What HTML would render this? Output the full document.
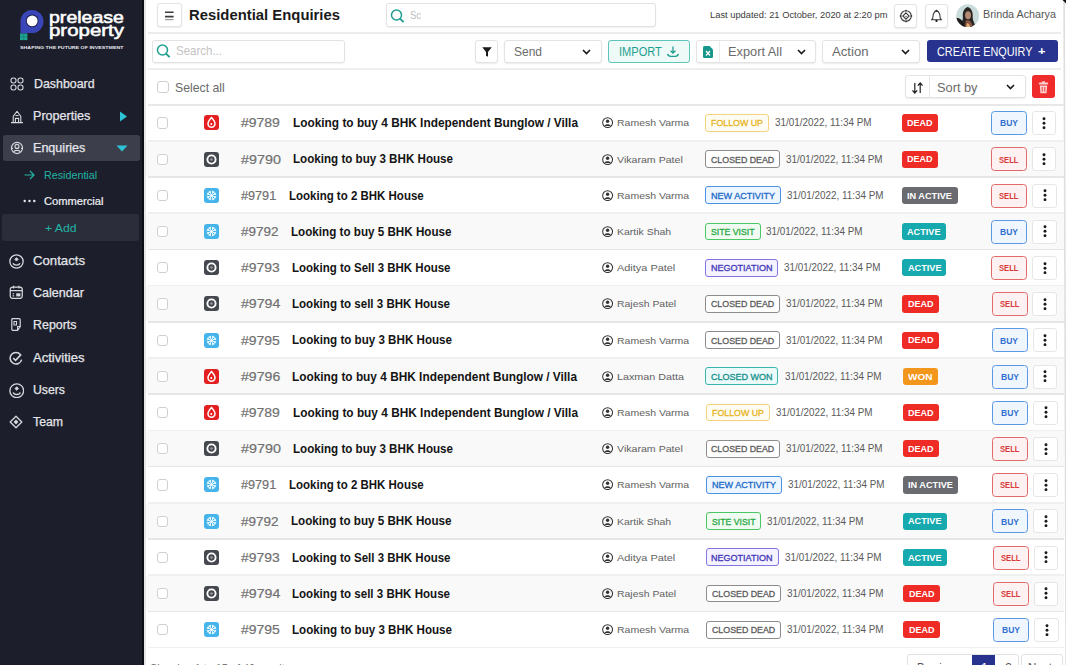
<!DOCTYPE html>
<html><head><meta charset="utf-8"><style>
html,body{margin:0;padding:0;}
body{width:1066px;height:665px;overflow:hidden;position:relative;background:#fff;font-family:'Liberation Sans',sans-serif;}
div{box-sizing:border-box;}
</style></head><body>
<div style="position:absolute;left:0px;top:0px;width:141.5px;height:665px;background:#1c1f2b"></div>
<div style="position:absolute;left:141.5px;top:0px;width:2.5px;height:665px;background:#0c0e15"></div>
<div style="position:absolute;left:144px;top:0px;width:1.5px;height:665px;background:#e6e6e9"></div>
<svg style="position:absolute;left:1058px;top:0" width="8" height="665"><path d="M5.3 0 L6.9 0 L8.9 665 L7.3 665 Z" fill="#dedede"/></svg>
<svg style="position:absolute;left:1062px;top:0" width="4" height="4"><path d="M0.5 0 H4 V3.5 Z" fill="#111"/></svg>
<svg style="position:absolute;left:18px;top:8px" width="30" height="34" viewBox="0 0 30 34">
<path d="M2.5 13.5 A11.5 11.5 0 1 1 14 25 L9 25 L9 25.5 L2.5 25.5 Z" fill="#3a45b8"/>
<circle cx="14.2" cy="12.9" r="6.4" fill="#1d2150"/>
<circle cx="14.2" cy="12.9" r="5.4" fill="#fff"/>
<rect x="2" y="25.6" width="7.4" height="6.5" fill="#1fa391"/>
<path d="M5.7 25.6 V32.1 M2 28.85 H9.4" stroke="#157a6d" stroke-width="0.6"/>
</svg>
<div id="t0" style="position:absolute;left:48.6px;top:6.90px;height:20.62px;line-height:20.62px;font-size:16.5px;font-weight:normal;color:#ffffff;white-space:nowrap;transform:scaleX(1.1849);transform-origin:0 50%;-webkit-text-stroke:0.55px #fff;">prelease</div>
<div id="t1" style="position:absolute;left:48.6px;top:20.31px;height:20.62px;line-height:20.62px;font-size:16.5px;font-weight:normal;color:#ffffff;white-space:nowrap;transform:scaleX(1.2390);transform-origin:0 50%;-webkit-text-stroke:0.55px #fff;">property</div>
<div id="t2" style="position:absolute;left:19.7px;top:45.31px;height:5.25px;line-height:5.25px;font-size:4.2px;font-weight:bold;color:#e8e8ee;white-space:nowrap;transform:scaleX(1.2636);transform-origin:0 50%;">SHAPING THE FUTURE OF INVESTMENT</div>
<svg style="position:absolute;left:9.8px;top:77.2px" width="14" height="14" viewBox="0 0 14 14" fill="none" stroke="#d7d8de" stroke-width="1.1"><rect x="1" y="1" width="5" height="5" rx="2.2"/><rect x="8" y="1" width="5" height="5" rx="2.2"/><rect x="1" y="8" width="5" height="5" rx="2.2"/><rect x="8" y="8" width="5" height="5" rx="2.2"/></svg>
<div id="t3" style="position:absolute;left:33.6px;top:76.82px;height:15.12px;line-height:15.12px;font-size:12.1px;font-weight:normal;color:#e4e5ea;white-space:nowrap;transform:scaleX(1.0241);transform-origin:0 50%;-webkit-text-stroke:0.25px #e4e5ea;">Dashboard</div>
<svg style="position:absolute;left:9.8px;top:109.5px" width="14" height="14" viewBox="0 0 14 14" fill="none" stroke="#d7d8de" stroke-width="1.1"><path d="M7 1.2 L3.2 6.5 L3.2 12.5 M7 1.2 L10.8 6.5 L10.8 12.5 M1 12.6 H13 M5.4 12.5 V8.4 H8.6 V12.5 M5.5 5.5 H8.5"/></svg>
<div id="t4" style="position:absolute;left:33.3px;top:109.01px;height:15.12px;line-height:15.12px;font-size:12.1px;font-weight:normal;color:#e4e5ea;white-space:nowrap;transform:scaleX(1.0413);transform-origin:0 50%;-webkit-text-stroke:0.25px #e4e5ea;">Properties</div>
<svg style="position:absolute;left:118.5px;top:110.5px" width="9" height="11" viewBox="0 0 9 11"><path d="M1 0.5 L8 5.5 L1 10.5 Z" fill="#2cc3d6"/></svg>
<div style="position:absolute;left:2.5px;top:135.2px;width:137px;height:25.6px;background:#3c3f4b;border-radius:3px"></div>
<svg style="position:absolute;left:9.8px;top:141.3px" width="14" height="14" viewBox="0 0 14 14" fill="none" stroke="#d7d8de" stroke-width="1.1"><circle cx="7" cy="7" r="5.6"/><circle cx="7" cy="5.4" r="2"/><path d="M3.6 11 C4.2 8.8 9.8 8.8 10.4 11"/><path d="M1.6 7.4 H3 M11 7.4 H12.4"/></svg>
<div id="t5" style="position:absolute;left:33.0px;top:141.20px;height:15.12px;line-height:15.12px;font-size:12.1px;font-weight:normal;color:#e4e5ea;white-space:nowrap;transform:scaleX(1.0392);transform-origin:0 50%;-webkit-text-stroke:0.25px #e4e5ea;">Enquiries</div>
<svg style="position:absolute;left:116px;top:145px" width="12" height="7" viewBox="0 0 12 7"><path d="M0.5 0.5 L11.5 0.5 L6 6.5 Z" fill="#2cc3d6"/></svg>
<svg style="position:absolute;left:24px;top:170px" width="11" height="10" viewBox="0 0 11 10" fill="none" stroke="#22b3a4" stroke-width="1.2"><path d="M0.5 5 H10 M6 1 L10 5 L6 9"/></svg>
<div id="t6" style="position:absolute;left:44.2px;top:168.71px;height:13.75px;line-height:13.75px;font-size:11px;font-weight:normal;color:#22b3a4;white-space:nowrap;transform:scaleX(0.9757);transform-origin:0 50%;">Residential</div>
<svg style="position:absolute;left:22.5px;top:199px" width="13" height="4" viewBox="0 0 13 4" fill="#e8e8ee"><circle cx="1.7" cy="2" r="1.2"/><circle cx="6.5" cy="2" r="1.2"/><circle cx="11.3" cy="2" r="1.2"/></svg>
<div id="t7" style="position:absolute;left:44.0px;top:194.50px;height:13.12px;line-height:13.12px;font-size:10.5px;font-weight:normal;color:#f0f0f4;white-space:nowrap;transform:scaleX(1.0622);transform-origin:0 50%;-webkit-text-stroke:0.2px #f0f0f4;">Commercial</div>
<div style="position:absolute;left:2.2px;top:214px;width:137.2px;height:26.5px;background:#2b2e3a;border-radius:3px"></div>
<div id="t8" style="position:absolute;left:45.0px;top:221.81px;height:13.75px;line-height:13.75px;font-size:11px;font-weight:normal;color:#22b3a4;white-space:nowrap;transform:scaleX(1.1071);transform-origin:0 50%;">+ Add</div>
<svg style="position:absolute;left:9.3px;top:253.6px" width="15" height="15" viewBox="0 0 14 14" fill="none" stroke="#d7d8de" stroke-width="1.1"><circle cx="7" cy="7" r="6.2" stroke-width="1.2"/><path d="M7 3.4 L8.6 5 L7 6.6 L5.4 5 Z" fill="#d7d8de" stroke-width="0.8"/><path d="M3.8 8.6 C4.6 11 9.4 11 10.2 8.6" stroke-width="1.3"/></svg>
<div id="t9" style="position:absolute;left:32.5px;top:254.01px;height:15.12px;line-height:15.12px;font-size:12.1px;font-weight:normal;color:#e4e5ea;white-space:nowrap;transform:scaleX(1.0894);transform-origin:0 50%;-webkit-text-stroke:0.25px #e4e5ea;">Contacts</div>
<svg style="position:absolute;left:9.2px;top:284.8px" width="14.5" height="14.5" viewBox="0 0 14 14" fill="none" stroke="#d7d8de" stroke-width="1.1"><rect x="1.2" y="2" width="11.6" height="11" rx="2.4" stroke-width="1.2"/><path d="M4.4 0.8 V3.4 M9.6 0.8 V3.4 M1.2 5.4 H12.8"/><rect x="7" y="8" width="4" height="3" fill="#d7d8de" stroke="none"/><path d="M3.5 8.5 H5 M3.5 10.5 H5"/></svg>
<div id="t10" style="position:absolute;left:32.5px;top:286.20px;height:15.12px;line-height:15.12px;font-size:12.1px;font-weight:normal;color:#e4e5ea;white-space:nowrap;transform:scaleX(1.0392);transform-origin:0 50%;-webkit-text-stroke:0.25px #e4e5ea;">Calendar</div>
<svg style="position:absolute;left:9.4px;top:317px" width="14" height="15" viewBox="0 0 14 14" fill="none" stroke="#d7d8de" stroke-width="1.1"><path d="M2.8 1.2 H10.2 Q11.2 1.2 11.2 2.2 V9 L8.6 12.8 H3.8 Q2.8 12.8 2.8 11.8 V2.2 Q2.8 1.2 3.8 1.2 Z" stroke-width="1.2"/><path d="M5 4 H7.5 V7.5 H5 Z M11.2 9 H8.6 V12.8" stroke-width="1.1"/></svg>
<div id="t11" style="position:absolute;left:32.5px;top:318.41px;height:15.12px;line-height:15.12px;font-size:12.1px;font-weight:normal;color:#e4e5ea;white-space:nowrap;transform:scaleX(1.0269);transform-origin:0 50%;-webkit-text-stroke:0.25px #e4e5ea;">Reports</div>
<svg style="position:absolute;left:9.2px;top:350.6px" width="14" height="14" viewBox="0 0 14 14" fill="none" stroke="#d7d8de" stroke-width="1.1"><path d="M11.5 3.6 A5.8 5.8 0 1 0 12.6 8.6" stroke-width="1.5"/><path d="M4.2 7.2 L6.6 9.4 L12.2 3.4" stroke-width="1.6"/></svg>
<div id="t12" style="position:absolute;left:32.5px;top:350.61px;height:15.12px;line-height:15.12px;font-size:12.1px;font-weight:normal;color:#e4e5ea;white-space:nowrap;transform:scaleX(1.0792);transform-origin:0 50%;-webkit-text-stroke:0.25px #e4e5ea;">Activities</div>
<svg style="position:absolute;left:8.8px;top:382.6px" width="15.5" height="15.5" viewBox="0 0 14 14" fill="none" stroke="#d7d8de" stroke-width="1.1"><circle cx="7" cy="7" r="6.2" stroke-width="1.2"/><path d="M7 3.4 L8.6 5 L7 6.6 L5.4 5 Z" fill="#d7d8de" stroke-width="0.8"/><path d="M3.8 8.6 C4.6 11 9.4 11 10.2 8.6" stroke-width="1.3"/></svg>
<div id="t13" style="position:absolute;left:32.5px;top:383.01px;height:15.12px;line-height:15.12px;font-size:12.1px;font-weight:normal;color:#e4e5ea;white-space:nowrap;transform:scaleX(1.0129);transform-origin:0 50%;-webkit-text-stroke:0.25px #e4e5ea;">Users</div>
<svg style="position:absolute;left:8.6px;top:414.8px" width="14" height="14" viewBox="0 0 14 14" fill="none" stroke="#d7d8de" stroke-width="1.1"><path d="M7 1.2 L12.8 7 L7 12.8 L1.2 7 Z" stroke-width="1.3" stroke-linejoin="round"/><path d="M7 4.6 L9.4 7 L7 9.4 L4.6 7 Z" fill="#d7d8de" stroke="none"/></svg>
<div id="t14" style="position:absolute;left:32.5px;top:415.01px;height:15.12px;line-height:15.12px;font-size:12.1px;font-weight:normal;color:#e4e5ea;white-space:nowrap;transform:scaleX(1.0143);transform-origin:0 50%;-webkit-text-stroke:0.25px #e4e5ea;">Team</div>
<div style="position:absolute;left:157px;top:3px;width:24.5px;height:23.5px;background:#fff;border:1px solid #e3e3e3;border-radius:3px;box-shadow:0 1px 1.5px rgba(0,0,0,0.08)"></div>
<svg style="position:absolute;left:165.3px;top:11px" width="9" height="10" viewBox="0 0 9 10" stroke-width="1.6"><path d="M0 1.3 H8.6 M0 5.6 H8.6" stroke="#3c3c3c"/><path d="M0 8.6 H8.6" stroke="#9a9a9a" stroke-width="1.2"/></svg>
<div id="t15" style="position:absolute;left:188.6px;top:5.41px;height:19.0px;line-height:19.0px;font-size:15.2px;font-weight:bold;color:#1a1a1a;white-space:nowrap;transform:scaleX(0.9776);transform-origin:0 50%;">Residential Enquiries</div>
<div style="position:absolute;left:385.6px;top:3.4px;width:270px;height:23.2px;background:#fff;border:1px solid #e2e2e2;border-radius:3px;box-shadow:0 1px 1.5px rgba(0,0,0,0.06)"></div>
<svg style="position:absolute;left:389.5px;top:8.5px" width="15" height="15" viewBox="0 0 15 15" fill="none" stroke="#1f9e90" stroke-width="1.5"><circle cx="6.5" cy="6" r="5"/><path d="M10 9.6 L13.6 13.2" stroke-width="1.9"/></svg>
<div id="t16" style="position:absolute;left:410.4px;top:7.90px;height:14.38px;line-height:14.38px;font-size:11.5px;font-weight:normal;color:#bdbdbd;white-space:nowrap;transform:scaleX(0.8196);transform-origin:0 50%;">Sc</div>
<div id="t17" style="position:absolute;left:709.6px;top:10.10px;height:10.62px;line-height:10.62px;font-size:8.5px;font-weight:normal;color:#3c3c3c;white-space:nowrap;transform:scaleX(1.0982);transform-origin:0 50%;">Last updated: 21 October, 2020 at 2:20 pm</div>
<div style="position:absolute;left:893.9px;top:3.5px;width:23px;height:24px;background:#fff;border:1px solid #e3e3e3;border-radius:3px;box-shadow:0 1px 1.5px rgba(0,0,0,0.08)"></div>
<svg style="position:absolute;left:898.5px;top:8.5px" width="14" height="14" viewBox="0 0 14 14" fill="none" stroke="#3a3a3a" stroke-width="1.1"><circle cx="7" cy="7" r="5.3"/><path d="M7 3.9 L10.1 7 L7 10.1 L3.9 7 Z"/><g fill="#3a3a3a" stroke="none"><circle cx="7" cy="1.6" r="0.9"/><circle cx="7" cy="12.4" r="0.9"/><circle cx="1.6" cy="7" r="0.9"/><circle cx="12.4" cy="7" r="0.9"/><circle cx="7" cy="7.4" r="0.7"/></g></svg>
<div style="position:absolute;left:924.6px;top:3.5px;width:23.6px;height:24px;background:#fff;border:1px solid #e3e3e3;border-radius:3px;box-shadow:0 1px 1.5px rgba(0,0,0,0.08)"></div>
<svg style="position:absolute;left:930px;top:8.5px" width="13" height="14" viewBox="0 0 13 14" fill="none" stroke="#3a3a3a" stroke-width="1.1"><path d="M6.5 1.2 C4 2.8 3 5 3 7.5 C3 9 2.6 10 1.6 10.8 H11.4 C10.4 10 10 9 10 7.5 C10 5 9 2.8 6.5 1.2 Z" stroke-linejoin="round"/><circle cx="6.5" cy="11.9" r="1.1" fill="#1a1a1a" stroke="none"/></svg>
<svg style="position:absolute;left:956.2px;top:3.6px" width="23.5" height="23.5" viewBox="0 0 24 24">
<defs><clipPath id="av"><circle cx="12" cy="12" r="11.7"/></clipPath></defs>
<g clip-path="url(#av)">
<rect width="24" height="24" fill="#c9dbdb"/>
<path d="M12 3 C8 4 6.5 9 7 13 C7.5 17 5 20 3 24 H21 C19 20 17 17 17 13 C17.5 9 16 4 12 3 Z" fill="#2a2522"/>
<ellipse cx="12.3" cy="11.5" rx="3" ry="4" fill="#b48a73"/>
<path d="M0 14 C4 14 8 17 9 24 H0 Z" fill="#1d1b1c"/>
<path d="M10 17 C13 16 16 17 17 24 H9 Z" fill="#8c5546"/>
<path d="M11 20 C12 19 14 20 14.5 24 H10.5 Z" fill="#d9b27a"/>
</g></svg>
<div id="t18" style="position:absolute;left:982.6px;top:9.00px;height:12.5px;line-height:12.5px;font-size:10px;font-weight:normal;color:#555;white-space:nowrap;transform:scaleX(1.0762);transform-origin:0 50%;">Brinda Acharya</div>
<div style="position:absolute;left:148px;top:31.8px;width:913px;height:1.8px;background:#ececed"></div>
<div style="position:absolute;left:151.5px;top:39.5px;width:193px;height:23.5px;background:#fff;border:1px solid #e2e2e2;border-radius:3px;box-shadow:0 1px 1.5px rgba(0,0,0,0.06)"></div>
<svg style="position:absolute;left:155.5px;top:44px" width="15" height="15" viewBox="0 0 15 15" fill="none" stroke="#1f9e90" stroke-width="1.5"><circle cx="6.5" cy="6" r="5"/><path d="M10 9.6 L13.6 13.2" stroke-width="1.9"/></svg>
<div id="t19" style="position:absolute;left:175.6px;top:44.31px;height:15.5px;line-height:15.5px;font-size:12.4px;font-weight:normal;color:#c4c4c4;white-space:nowrap;transform:scaleX(0.9275);transform-origin:0 50%;">Search...</div>
<div style="position:absolute;left:475.2px;top:39.7px;width:22.5px;height:23px;background:#fff;border:1px solid #e3e3e3;border-radius:3px;box-shadow:0 1px 1.5px rgba(0,0,0,0.08)"></div>
<svg style="position:absolute;left:481.5px;top:46.5px" width="10" height="10" viewBox="0 0 10 10" fill="#1a1a1a"><path d="M0.3 0.3 H9.7 L6 5 V9.7 L4 8.7 V5 Z"/></svg>
<div style="position:absolute;left:504px;top:39.7px;width:97.6px;height:23px;background:#fff;border:1px solid #e3e3e3;border-radius:3px;box-shadow:0 1px 1.5px rgba(0,0,0,0.08)"></div>
<div id="t20" style="position:absolute;left:513.6px;top:44.50px;height:15.0px;line-height:15.0px;font-size:12px;font-weight:normal;color:#6b6b6b;white-space:nowrap;transform:scaleX(0.9989);transform-origin:0 50%;">Send</div>
<svg style="position:absolute;left:582.3px;top:48.5px" width="9" height="6" viewBox="0 0 9 6" fill="none" stroke="#1a1a1a" stroke-width="1.6"><path d="M1 1 L4.5 4.6 L8 1"/></svg>
<div style="position:absolute;left:608px;top:39.7px;width:81.6px;height:23px;background:#eefaf8;border:1.3px solid #5cc4b8;border-radius:3px"></div>
<div id="t21" style="position:absolute;left:618.6px;top:44.50px;height:15.0px;line-height:15.0px;font-size:12px;font-weight:normal;color:#1f9e90;white-space:nowrap;transform:scaleX(0.9214);transform-origin:0 50%;">IMPORT</div>
<svg style="position:absolute;left:666px;top:44.5px" width="14" height="13" viewBox="0 0 14 13" fill="none" stroke="#1f9e90" stroke-width="1.2"><path d="M7 1.5 V8.2 M4.6 5.8 L7 8.2 L9.4 5.8" stroke-width="1.3"/><path d="M1.6 9 Q2.2 11.3 4.5 11.3 H9.5 Q11.8 11.3 12.4 9" stroke-width="1.3"/></svg>
<div style="position:absolute;left:695.6px;top:39.7px;width:120.6px;height:23px;background:#fff;border:1px solid #e3e3e3;border-radius:3px;box-shadow:0 1px 1.5px rgba(0,0,0,0.08)"></div>
<div style="position:absolute;left:719.1px;top:40.5px;width:1px;height:21.5px;background:#ececec"></div>
<svg style="position:absolute;left:702.5px;top:45.8px" width="10" height="12" viewBox="0 0 10 12"><path d="M0 1.5 Q0 0 1.5 0 H6.5 L10 3.5 V10.5 Q10 12 8.5 12 H1.5 Q0 12 0 10.5 Z" fill="#17978b"/><path d="M3 5 L7 9.5 M7 5 L3 9.5" stroke="#fff" stroke-width="1.3"/></svg>
<div id="t22" style="position:absolute;left:728.2px;top:44.50px;height:15.0px;line-height:15.0px;font-size:12px;font-weight:normal;color:#6b6b6b;white-space:nowrap;transform:scaleX(1.0650);transform-origin:0 50%;">Export All</div>
<svg style="position:absolute;left:796.6px;top:48.5px" width="9" height="6" viewBox="0 0 9 6" fill="none" stroke="#1a1a1a" stroke-width="1.6"><path d="M1 1 L4.5 4.6 L8 1"/></svg>
<div style="position:absolute;left:822px;top:39.7px;width:97.8px;height:23px;background:#fff;border:1px solid #e3e3e3;border-radius:3px;box-shadow:0 1px 1.5px rgba(0,0,0,0.08)"></div>
<div id="t23" style="position:absolute;left:832.2px;top:44.50px;height:15.0px;line-height:15.0px;font-size:12px;font-weight:normal;color:#6b6b6b;white-space:nowrap;transform:scaleX(1.0971);transform-origin:0 50%;">Action</div>
<svg style="position:absolute;left:900.8px;top:48.5px" width="9" height="6" viewBox="0 0 9 6" fill="none" stroke="#1a1a1a" stroke-width="1.6"><path d="M1 1 L4.5 4.6 L8 1"/></svg>
<div style="position:absolute;left:926.8px;top:39.8px;width:131.6px;height:22.6px;background:#27338f;border-radius:3px"></div>
<div id="t24" style="position:absolute;left:937.2px;top:44.51px;height:15.5px;line-height:15.5px;font-size:12.4px;font-weight:normal;color:#ffffff;white-space:nowrap;transform:scaleX(0.8760);transform-origin:0 50%;">CREATE ENQUIRY</div>
<div id="t25" style="position:absolute;left:1037.8px;top:45.00px;height:13.75px;line-height:13.75px;font-size:11px;font-weight:bold;color:#ffffff;white-space:nowrap;transform:scaleX(1.1650);transform-origin:0 50%;">+</div>
<div style="position:absolute;left:148px;top:68px;width:913px;height:1.6px;background:#eeeeef"></div>
<div style="position:absolute;left:157px;top:81px;width:12.3px;height:12.3px;background:#fff;border:1.2px solid #cfcfcf;border-radius:3px"></div>
<div id="t26" style="position:absolute;left:174.8px;top:79.61px;height:16.0px;line-height:16.0px;font-size:12.8px;font-weight:normal;color:#6a6a6a;white-space:nowrap;transform:scaleX(0.9588);transform-origin:0 50%;">Select all</div>
<div style="position:absolute;left:905.3px;top:75.4px;width:120.4px;height:23px;background:#fff;border:1px solid #e3e3e3;border-radius:3px;box-shadow:0 1px 1.5px rgba(0,0,0,0.08)"></div>
<div style="position:absolute;left:928.5px;top:76.2px;width:1px;height:21.5px;background:#e6e6e6"></div>
<svg style="position:absolute;left:910.5px;top:81.5px" width="13" height="12" viewBox="0 0 13 12" fill="none" stroke="#222" stroke-width="1.2"><path d="M3.8 1 V11 M1.4 8.4 L3.8 11 L6.2 8.4 M9.2 11 V1 M6.8 3.6 L9.2 1 L11.6 3.6"/></svg>
<div id="t27" style="position:absolute;left:937.4px;top:80.50px;height:15.0px;line-height:15.0px;font-size:12px;font-weight:normal;color:#6b6b6b;white-space:nowrap;transform:scaleX(1.0654);transform-origin:0 50%;">Sort by</div>
<svg style="position:absolute;left:1005.9px;top:84.3px" width="9" height="6" viewBox="0 0 9 6" fill="none" stroke="#1a1a1a" stroke-width="1.6"><path d="M1 1 L4.5 4.6 L8 1"/></svg>
<div style="position:absolute;left:1031.8px;top:75.4px;width:23.6px;height:23px;background:#ef2b2b;border-radius:3px"></div>
<svg style="position:absolute;left:1038px;top:80.5px" width="11" height="13" viewBox="0 0 11 13"><rect x="0.8" y="1.6" width="9.4" height="2" rx="0.8" fill="#fbd0d0"/><rect x="3.8" y="0.3" width="3.4" height="1.6" rx="0.6" fill="#fbd0d0"/><path d="M1.8 4.4 H9.2 L8.6 12.2 H2.4 Z" fill="#fbd0d0"/><path d="M4.2 6 V10.6 M6.8 6 V10.6" stroke="#ef2b2b" stroke-width="0.9"/></svg>
<div style="position:absolute;left:148px;top:104.2px;width:915.5px;height:1.5px;background:#e8e8e9"></div>
<div style="position:absolute;left:148px;top:140.0px;width:915.5px;height:1.6px;background:#f0f0f1"></div>
<div style="position:absolute;left:156.7px;top:117.30000000000001px;width:11.3px;height:11.3px;background:#fff;border:1.2px solid #d0d0d0;border-radius:3px"></div>
<svg style="position:absolute;left:203.6px;top:115.40px" width="15" height="15" viewBox="0 0 15 15"><rect width="15" height="15" rx="3" fill="#e41f1f"/><path d="M7.5 2.6 C9.6 4.9 11 6.7 11 8.7 A3.5 3.5 0 0 1 4 8.7 C4 6.7 5.4 4.9 7.5 2.6 Z" fill="none" stroke="#fff" stroke-width="1.5"/><circle cx="7.3" cy="8.9" r="1" fill="#fff"/></svg>
<div id="t28" style="position:absolute;left:240.6px;top:115.41px;height:16.5px;line-height:16.5px;font-size:13.2px;font-weight:normal;color:#707070;white-space:nowrap;transform:scaleX(1.0608);transform-origin:0 50%;-webkit-text-stroke:0.2px #707070;">#9789</div>
<div id="t29" style="position:absolute;left:292.5px;top:116.11px;height:15.38px;line-height:15.38px;font-size:12.3px;font-weight:bold;color:#141414;white-space:nowrap;transform:scaleX(0.9642);transform-origin:0 50%;">Looking to buy 4 BHK Independent Bunglow / Villa</div>
<svg style="position:absolute;left:602.2px;top:117.30px" width="11.2" height="11.2" viewBox="0 0 12 12"><circle cx="6" cy="6" r="5.3" fill="none" stroke="#333" stroke-width="1.1"/><circle cx="6" cy="4.6" r="1.8" fill="#333"/><path d="M2.6 9.6 C3.4 7.3 8.6 7.3 9.4 9.6 Z" fill="#333"/></svg>
<div id="t30" style="position:absolute;left:616.8px;top:117.40px;height:12.25px;line-height:12.25px;font-size:9.8px;font-weight:normal;color:#626262;white-space:nowrap;transform:scaleX(1.0721);transform-origin:0 50%;">Ramesh Varma</div>
<div style="position:absolute;left:705.2px;top:114.0px;width:64.3px;height:17.8px;background:#fffdf3;border:1.3px solid #f3d37c;border-radius:3px"></div>
<div id="t31" style="position:absolute;left:711.35px;top:118.30px;height:11.0px;line-height:11.0px;font-size:8.8px;font-weight:normal;color:#e6b41e;white-space:nowrap;transform:scaleX(1.0036);transform-origin:0 50%;-webkit-text-stroke:0.3px #e6b41e;">FOLLOW UP</div>
<div id="t32" style="position:absolute;left:775.3px;top:117.40px;height:12.5px;line-height:12.5px;font-size:10px;font-weight:normal;color:#5a5a5a;white-space:nowrap;transform:scaleX(0.9880);transform-origin:0 50%;">31/01/2022, 11:34 PM</div>
<div style="position:absolute;left:901.7px;top:114.4px;width:36.4px;height:17.2px;background:#ee2b25;border-radius:3px"></div>
<div id="t33" style="position:absolute;left:907.1500000000001px;top:118.21px;height:11.62px;line-height:11.62px;font-size:9.3px;font-weight:bold;color:#ffffff;white-space:nowrap;transform:scaleX(0.9680);transform-origin:0 50%;">DEAD</div>
<div style="position:absolute;left:990.8px;top:111.10000000000001px;width:36px;height:24.2px;background:#eff6fe;border:1.3px solid #5a98e4;border-radius:3.5px"></div>
<div id="t34" style="position:absolute;left:999.5px;top:118.30px;height:11.62px;line-height:11.62px;font-size:9.3px;font-weight:bold;color:#2f6fd0;white-space:nowrap;transform:scaleX(0.9165);transform-origin:0 50%;">BUY</div>
<div style="position:absolute;left:1031.6px;top:111.10000000000001px;width:24.6px;height:24.2px;background:#fff;border:1px solid #e6e6e6;border-radius:3px"></div>
<svg style="position:absolute;left:1042.20px;top:116.70px" width="4" height="12.4" viewBox="0 0 4 12.4" fill="#1a1a1a"><circle cx="2" cy="1.7" r="1.45"/><circle cx="2" cy="6.2" r="1.45"/><circle cx="2" cy="10.7" r="1.45"/></svg>
<div style="position:absolute;left:145.5px;top:141.6px;width:918px;height:34.6px;background:#f9f9f9"></div>
<div style="position:absolute;left:148px;top:176.2px;width:915.5px;height:1.6px;background:#e6e6e7"></div>
<div style="position:absolute;left:156.7px;top:153.50000000000003px;width:11.3px;height:11.3px;background:#fff;border:1.2px solid #d0d0d0;border-radius:3px"></div>
<svg style="position:absolute;left:203.6px;top:151.60px" width="15" height="15" viewBox="0 0 15 15"><rect width="15" height="15" rx="3" fill="#45484f"/><circle cx="7.5" cy="7.5" r="4.1" fill="none" stroke="#fff" stroke-width="1.9"/><circle cx="7.5" cy="7.5" r="1.2" fill="#9a9ca0"/></svg>
<div id="t35" style="position:absolute;left:240.6px;top:151.60px;height:16.5px;line-height:16.5px;font-size:13.2px;font-weight:normal;color:#707070;white-space:nowrap;transform:scaleX(1.0880);transform-origin:0 50%;-webkit-text-stroke:0.2px #707070;">#9790</div>
<div id="t36" style="position:absolute;left:293.1px;top:152.30px;height:15.38px;line-height:15.38px;font-size:12.3px;font-weight:bold;color:#141414;white-space:nowrap;transform:scaleX(0.9443);transform-origin:0 50%;">Looking to buy 3 BHK House</div>
<svg style="position:absolute;left:602.2px;top:153.50px" width="11.2" height="11.2" viewBox="0 0 12 12"><circle cx="6" cy="6" r="5.3" fill="none" stroke="#333" stroke-width="1.1"/><circle cx="6" cy="4.6" r="1.8" fill="#333"/><path d="M2.6 9.6 C3.4 7.3 8.6 7.3 9.4 9.6 Z" fill="#333"/></svg>
<div id="t37" style="position:absolute;left:616.81px;top:153.61px;height:12.25px;line-height:12.25px;font-size:9.8px;font-weight:normal;color:#626262;white-space:nowrap;transform:scaleX(1.0820);transform-origin:0 50%;">Vikaram Patel</div>
<div style="position:absolute;left:705.24px;top:150.20000000000002px;width:74.8px;height:17.8px;background:#ffffff;border:1.3px solid #8c8c8c;border-radius:3px"></div>
<div id="t38" style="position:absolute;left:711.04px;top:154.51px;height:11.0px;line-height:11.0px;font-size:8.8px;font-weight:normal;color:#5c5c5c;white-space:nowrap;transform:scaleX(1.0022);transform-origin:0 50%;-webkit-text-stroke:0.3px #5c5c5c;">CLOSED DEAD</div>
<div id="t39" style="position:absolute;left:785.87px;top:153.60px;height:12.5px;line-height:12.5px;font-size:10px;font-weight:normal;color:#5a5a5a;white-space:nowrap;transform:scaleX(0.9880);transform-origin:0 50%;">31/01/2022, 11:34 PM</div>
<div style="position:absolute;left:901.82px;top:150.60000000000002px;width:36.4px;height:17.2px;background:#ee2b25;border-radius:3px"></div>
<div id="t40" style="position:absolute;left:907.2700000000001px;top:154.40px;height:11.62px;line-height:11.62px;font-size:9.3px;font-weight:bold;color:#ffffff;white-space:nowrap;transform:scaleX(0.9680);transform-origin:0 50%;">DEAD</div>
<div style="position:absolute;left:990.95px;top:147.3px;width:36px;height:24.2px;background:#fdf1f1;border:1.3px solid #e06a6a;border-radius:3.5px"></div>
<div id="t41" style="position:absolute;left:998.95px;top:154.51px;height:11.62px;line-height:11.62px;font-size:9.3px;font-weight:bold;color:#d83a3a;white-space:nowrap;transform:scaleX(0.8205);transform-origin:0 50%;">SELL</div>
<div style="position:absolute;left:1031.77px;top:147.3px;width:24.6px;height:24.2px;background:#fff;border:1px solid #e6e6e6;border-radius:3px"></div>
<svg style="position:absolute;left:1042.37px;top:152.90px" width="4" height="12.4" viewBox="0 0 4 12.4" fill="#1a1a1a"><circle cx="2" cy="1.7" r="1.45"/><circle cx="2" cy="6.2" r="1.45"/><circle cx="2" cy="10.7" r="1.45"/></svg>
<div style="position:absolute;left:148px;top:212.4px;width:915.5px;height:1.6px;background:#f0f0f1"></div>
<div style="position:absolute;left:156.7px;top:189.70000000000002px;width:11.3px;height:11.3px;background:#fff;border:1.2px solid #d0d0d0;border-radius:3px"></div>
<svg style="position:absolute;left:203.6px;top:187.80px" width="15" height="15" viewBox="0 0 15 15"><rect width="15" height="15" rx="3" fill="#45b4ea"/><circle cx="7.5" cy="7.5" r="4.8" fill="#dff3fc"/><g stroke="#45b4ea" stroke-width="1"><path d="M4.6 4.6 L10.4 10.4 M10.4 4.6 L4.6 10.4 M7.5 2.7 V12.3 M2.7 7.5 H12.3"/></g><circle cx="7.5" cy="7.5" r="1.6" fill="#fff"/></svg>
<div id="t42" style="position:absolute;left:240.6px;top:187.81px;height:16.5px;line-height:16.5px;font-size:13.2px;font-weight:normal;color:#707070;white-space:nowrap;transform:scaleX(0.9599);transform-origin:0 50%;-webkit-text-stroke:0.2px #707070;">#9791</div>
<div id="t43" style="position:absolute;left:289.1px;top:188.51px;height:15.38px;line-height:15.38px;font-size:12.3px;font-weight:bold;color:#141414;white-space:nowrap;transform:scaleX(0.9344);transform-origin:0 50%;">Looking to 2 BHK House</div>
<svg style="position:absolute;left:602.2px;top:189.70px" width="11.2" height="11.2" viewBox="0 0 12 12"><circle cx="6" cy="6" r="5.3" fill="none" stroke="#333" stroke-width="1.1"/><circle cx="6" cy="4.6" r="1.8" fill="#333"/><path d="M2.6 9.6 C3.4 7.3 8.6 7.3 9.4 9.6 Z" fill="#333"/></svg>
<div id="t44" style="position:absolute;left:616.81px;top:189.80px;height:12.25px;line-height:12.25px;font-size:9.8px;font-weight:normal;color:#626262;white-space:nowrap;transform:scaleX(1.0721);transform-origin:0 50%;">Ramesh Varma</div>
<div style="position:absolute;left:705.28px;top:186.4px;width:76px;height:17.8px;background:#eef6ff;border:1.3px solid #4a92e4;border-radius:3px"></div>
<div id="t45" style="position:absolute;left:711.28px;top:190.71px;height:11.0px;line-height:11.0px;font-size:8.8px;font-weight:normal;color:#1d6cc9;white-space:nowrap;transform:scaleX(1.0310);transform-origin:0 50%;-webkit-text-stroke:0.3px #1d6cc9;">NEW ACTIVITY</div>
<div id="t46" style="position:absolute;left:787.15px;top:189.81px;height:12.5px;line-height:12.5px;font-size:10px;font-weight:normal;color:#5a5a5a;white-space:nowrap;transform:scaleX(0.9880);transform-origin:0 50%;">31/01/2022, 11:34 PM</div>
<div style="position:absolute;left:901.94px;top:186.8px;width:55.6px;height:17.2px;background:#696b70;border-radius:3px"></div>
<div id="t47" style="position:absolute;left:907.24px;top:190.61px;height:11.62px;line-height:11.62px;font-size:9.3px;font-weight:bold;color:#ffffff;white-space:nowrap;transform:scaleX(0.9860);transform-origin:0 50%;">IN ACTIVE</div>
<div style="position:absolute;left:991.11px;top:183.5px;width:36px;height:24.2px;background:#fdf1f1;border:1.3px solid #e06a6a;border-radius:3.5px"></div>
<div id="t48" style="position:absolute;left:999.11px;top:190.71px;height:11.62px;line-height:11.62px;font-size:9.3px;font-weight:bold;color:#d83a3a;white-space:nowrap;transform:scaleX(0.8205);transform-origin:0 50%;">SELL</div>
<div style="position:absolute;left:1031.94px;top:183.5px;width:24.6px;height:24.2px;background:#fff;border:1px solid #e6e6e6;border-radius:3px"></div>
<svg style="position:absolute;left:1042.54px;top:189.10px" width="4" height="12.4" viewBox="0 0 4 12.4" fill="#1a1a1a"><circle cx="2" cy="1.7" r="1.45"/><circle cx="2" cy="6.2" r="1.45"/><circle cx="2" cy="10.7" r="1.45"/></svg>
<div style="position:absolute;left:145.5px;top:214.0px;width:918px;height:34.6px;background:#f9f9f9"></div>
<div style="position:absolute;left:148px;top:248.60000000000002px;width:915.5px;height:1.6px;background:#e6e6e7"></div>
<div style="position:absolute;left:156.7px;top:225.9px;width:11.3px;height:11.3px;background:#fff;border:1.2px solid #d0d0d0;border-radius:3px"></div>
<svg style="position:absolute;left:203.6px;top:224.00px" width="15" height="15" viewBox="0 0 15 15"><rect width="15" height="15" rx="3" fill="#45b4ea"/><circle cx="7.5" cy="7.5" r="4.8" fill="#dff3fc"/><g stroke="#45b4ea" stroke-width="1"><path d="M4.6 4.6 L10.4 10.4 M10.4 4.6 L4.6 10.4 M7.5 2.7 V12.3 M2.7 7.5 H12.3"/></g><circle cx="7.5" cy="7.5" r="1.6" fill="#fff"/></svg>
<div id="t49" style="position:absolute;left:240.6px;top:224.00px;height:16.5px;line-height:16.5px;font-size:13.2px;font-weight:normal;color:#707070;white-space:nowrap;transform:scaleX(1.0226);transform-origin:0 50%;-webkit-text-stroke:0.2px #707070;">#9792</div>
<div id="t50" style="position:absolute;left:291.40000000000003px;top:224.71px;height:15.38px;line-height:15.38px;font-size:12.3px;font-weight:bold;color:#141414;white-space:nowrap;transform:scaleX(0.9473);transform-origin:0 50%;">Looking to buy 5 BHK House</div>
<svg style="position:absolute;left:602.2px;top:225.90px" width="11.2" height="11.2" viewBox="0 0 12 12"><circle cx="6" cy="6" r="5.3" fill="none" stroke="#333" stroke-width="1.1"/><circle cx="6" cy="4.6" r="1.8" fill="#333"/><path d="M2.6 9.6 C3.4 7.3 8.6 7.3 9.4 9.6 Z" fill="#333"/></svg>
<div id="t51" style="position:absolute;left:616.82px;top:226.01px;height:12.25px;line-height:12.25px;font-size:9.8px;font-weight:normal;color:#626262;white-space:nowrap;transform:scaleX(1.0700);transform-origin:0 50%;">Kartik Shah</div>
<div style="position:absolute;left:705.32px;top:222.6px;width:55.2px;height:17.8px;background:#f0fcf1;border:1.3px solid #4cc766;border-radius:3px"></div>
<div id="t52" style="position:absolute;left:711.1700000000001px;top:226.90px;height:11.0px;line-height:11.0px;font-size:8.8px;font-weight:normal;color:#2aa845;white-space:nowrap;transform:scaleX(0.9886);transform-origin:0 50%;-webkit-text-stroke:0.3px #2aa845;">SITE VISIT</div>
<div id="t53" style="position:absolute;left:766.4px;top:226.00px;height:12.5px;line-height:12.5px;font-size:10px;font-weight:normal;color:#5a5a5a;white-space:nowrap;transform:scaleX(0.9880);transform-origin:0 50%;">31/01/2022, 11:34 PM</div>
<div style="position:absolute;left:902.06px;top:223.0px;width:44.2px;height:17.2px;background:#16a9ae;border-radius:3px"></div>
<div id="t54" style="position:absolute;left:907.41px;top:226.80px;height:11.62px;line-height:11.62px;font-size:9.3px;font-weight:bold;color:#ffffff;white-space:nowrap;transform:scaleX(0.9826);transform-origin:0 50%;">ACTIVE</div>
<div style="position:absolute;left:991.26px;top:219.7px;width:36px;height:24.2px;background:#eff6fe;border:1.3px solid #5a98e4;border-radius:3.5px"></div>
<div id="t55" style="position:absolute;left:999.96px;top:226.90px;height:11.62px;line-height:11.62px;font-size:9.3px;font-weight:bold;color:#2f6fd0;white-space:nowrap;transform:scaleX(0.9165);transform-origin:0 50%;">BUY</div>
<div style="position:absolute;left:1032.11px;top:219.7px;width:24.6px;height:24.2px;background:#fff;border:1px solid #e6e6e6;border-radius:3px"></div>
<svg style="position:absolute;left:1042.71px;top:225.30px" width="4" height="12.4" viewBox="0 0 4 12.4" fill="#1a1a1a"><circle cx="2" cy="1.7" r="1.45"/><circle cx="2" cy="6.2" r="1.45"/><circle cx="2" cy="10.7" r="1.45"/></svg>
<div style="position:absolute;left:148px;top:284.8px;width:915.5px;height:1.6px;background:#f0f0f1"></div>
<div style="position:absolute;left:156.7px;top:262.1px;width:11.3px;height:11.3px;background:#fff;border:1.2px solid #d0d0d0;border-radius:3px"></div>
<svg style="position:absolute;left:203.6px;top:260.20px" width="15" height="15" viewBox="0 0 15 15"><rect width="15" height="15" rx="3" fill="#45484f"/><circle cx="7.5" cy="7.5" r="4.1" fill="none" stroke="#fff" stroke-width="1.9"/><circle cx="7.5" cy="7.5" r="1.2" fill="#9a9ca0"/></svg>
<div id="t56" style="position:absolute;left:240.6px;top:260.21px;height:16.5px;line-height:16.5px;font-size:13.2px;font-weight:normal;color:#707070;white-space:nowrap;transform:scaleX(1.0553);transform-origin:0 50%;-webkit-text-stroke:0.2px #707070;">#9793</div>
<div id="t57" style="position:absolute;left:291.5px;top:260.90px;height:15.38px;line-height:15.38px;font-size:12.3px;font-weight:bold;color:#141414;white-space:nowrap;transform:scaleX(0.9354);transform-origin:0 50%;">Looking to Sell 3 BHK House</div>
<svg style="position:absolute;left:602.2px;top:262.10px" width="11.2" height="11.2" viewBox="0 0 12 12"><circle cx="6" cy="6" r="5.3" fill="none" stroke="#333" stroke-width="1.1"/><circle cx="6" cy="4.6" r="1.8" fill="#333"/><path d="M2.6 9.6 C3.4 7.3 8.6 7.3 9.4 9.6 Z" fill="#333"/></svg>
<div id="t58" style="position:absolute;left:616.83px;top:262.21px;height:12.25px;line-height:12.25px;font-size:9.8px;font-weight:normal;color:#626262;white-space:nowrap;transform:scaleX(1.1151);transform-origin:0 50%;">Aditya Patel</div>
<div style="position:absolute;left:705.37px;top:258.80000000000007px;width:73px;height:17.8px;background:#f5f3ff;border:1.3px solid #8277e2;border-radius:3px"></div>
<div id="t59" style="position:absolute;left:711.12px;top:263.11px;height:11.0px;line-height:11.0px;font-size:8.8px;font-weight:normal;color:#4337b8;white-space:nowrap;transform:scaleX(1.0258);transform-origin:0 50%;-webkit-text-stroke:0.3px #4337b8;">NEGOTIATION</div>
<div id="t60" style="position:absolute;left:784.29px;top:262.21px;height:12.5px;line-height:12.5px;font-size:10px;font-weight:normal;color:#5a5a5a;white-space:nowrap;transform:scaleX(0.9880);transform-origin:0 50%;">31/01/2022, 11:34 PM</div>
<div style="position:absolute;left:902.17px;top:259.20000000000005px;width:44.2px;height:17.2px;background:#16a9ae;border-radius:3px"></div>
<div id="t61" style="position:absolute;left:907.52px;top:263.01px;height:11.62px;line-height:11.62px;font-size:9.3px;font-weight:bold;color:#ffffff;white-space:nowrap;transform:scaleX(0.9826);transform-origin:0 50%;">ACTIVE</div>
<div style="position:absolute;left:991.41px;top:255.90000000000003px;width:36px;height:24.2px;background:#fdf1f1;border:1.3px solid #e06a6a;border-radius:3.5px"></div>
<div id="t62" style="position:absolute;left:999.41px;top:263.11px;height:11.62px;line-height:11.62px;font-size:9.3px;font-weight:bold;color:#d83a3a;white-space:nowrap;transform:scaleX(0.8205);transform-origin:0 50%;">SELL</div>
<div style="position:absolute;left:1032.28px;top:255.90000000000003px;width:24.6px;height:24.2px;background:#fff;border:1px solid #e6e6e6;border-radius:3px"></div>
<svg style="position:absolute;left:1042.88px;top:261.50px" width="4" height="12.4" viewBox="0 0 4 12.4" fill="#1a1a1a"><circle cx="2" cy="1.7" r="1.45"/><circle cx="2" cy="6.2" r="1.45"/><circle cx="2" cy="10.7" r="1.45"/></svg>
<div style="position:absolute;left:145.5px;top:286.40000000000003px;width:918px;height:34.6px;background:#f9f9f9"></div>
<div style="position:absolute;left:148px;top:321.0px;width:915.5px;height:1.6px;background:#e6e6e7"></div>
<div style="position:absolute;left:156.7px;top:298.29999999999995px;width:11.3px;height:11.3px;background:#fff;border:1.2px solid #d0d0d0;border-radius:3px"></div>
<svg style="position:absolute;left:203.6px;top:296.40px" width="15" height="15" viewBox="0 0 15 15"><rect width="15" height="15" rx="3" fill="#45484f"/><circle cx="7.5" cy="7.5" r="4.1" fill="none" stroke="#fff" stroke-width="1.9"/><circle cx="7.5" cy="7.5" r="1.2" fill="#9a9ca0"/></svg>
<div id="t63" style="position:absolute;left:240.6px;top:296.41px;height:16.5px;line-height:16.5px;font-size:13.2px;font-weight:normal;color:#707070;white-space:nowrap;transform:scaleX(1.0717);transform-origin:0 50%;-webkit-text-stroke:0.2px #707070;">#9794</div>
<div id="t64" style="position:absolute;left:292.1px;top:297.11px;height:15.38px;line-height:15.38px;font-size:12.3px;font-weight:bold;color:#141414;white-space:nowrap;transform:scaleX(0.9400);transform-origin:0 50%;">Looking to sell 3 BHK House</div>
<svg style="position:absolute;left:602.2px;top:298.30px" width="11.2" height="11.2" viewBox="0 0 12 12"><circle cx="6" cy="6" r="5.3" fill="none" stroke="#333" stroke-width="1.1"/><circle cx="6" cy="4.6" r="1.8" fill="#333"/><path d="M2.6 9.6 C3.4 7.3 8.6 7.3 9.4 9.6 Z" fill="#333"/></svg>
<div id="t65" style="position:absolute;left:616.83px;top:298.40px;height:12.25px;line-height:12.25px;font-size:9.8px;font-weight:normal;color:#626262;white-space:nowrap;transform:scaleX(1.0655);transform-origin:0 50%;">Rajesh Patel</div>
<div style="position:absolute;left:705.41px;top:295.0px;width:74.8px;height:17.8px;background:#ffffff;border:1.3px solid #8c8c8c;border-radius:3px"></div>
<div id="t66" style="position:absolute;left:711.2099999999999px;top:299.30px;height:11.0px;line-height:11.0px;font-size:8.8px;font-weight:normal;color:#5c5c5c;white-space:nowrap;transform:scaleX(1.0022);transform-origin:0 50%;-webkit-text-stroke:0.3px #5c5c5c;">CLOSED DEAD</div>
<div id="t67" style="position:absolute;left:786.16px;top:298.40px;height:12.5px;line-height:12.5px;font-size:10px;font-weight:normal;color:#5a5a5a;white-space:nowrap;transform:scaleX(0.9880);transform-origin:0 50%;">31/01/2022, 11:34 PM</div>
<div style="position:absolute;left:902.29px;top:295.4px;width:36.4px;height:17.2px;background:#ee2b25;border-radius:3px"></div>
<div id="t68" style="position:absolute;left:907.74px;top:299.21px;height:11.62px;line-height:11.62px;font-size:9.3px;font-weight:bold;color:#ffffff;white-space:nowrap;transform:scaleX(0.9680);transform-origin:0 50%;">DEAD</div>
<div style="position:absolute;left:991.57px;top:292.09999999999997px;width:36px;height:24.2px;background:#fdf1f1;border:1.3px solid #e06a6a;border-radius:3.5px"></div>
<div id="t69" style="position:absolute;left:999.57px;top:299.30px;height:11.62px;line-height:11.62px;font-size:9.3px;font-weight:bold;color:#d83a3a;white-space:nowrap;transform:scaleX(0.8205);transform-origin:0 50%;">SELL</div>
<div style="position:absolute;left:1032.45px;top:292.09999999999997px;width:24.6px;height:24.2px;background:#fff;border:1px solid #e6e6e6;border-radius:3px"></div>
<svg style="position:absolute;left:1043.05px;top:297.70px" width="4" height="12.4" viewBox="0 0 4 12.4" fill="#1a1a1a"><circle cx="2" cy="1.7" r="1.45"/><circle cx="2" cy="6.2" r="1.45"/><circle cx="2" cy="10.7" r="1.45"/></svg>
<div style="position:absolute;left:148px;top:357.20000000000005px;width:915.5px;height:1.6px;background:#f0f0f1"></div>
<div style="position:absolute;left:156.7px;top:334.5px;width:11.3px;height:11.3px;background:#fff;border:1.2px solid #d0d0d0;border-radius:3px"></div>
<svg style="position:absolute;left:203.6px;top:332.60px" width="15" height="15" viewBox="0 0 15 15"><rect width="15" height="15" rx="3" fill="#45b4ea"/><circle cx="7.5" cy="7.5" r="4.8" fill="#dff3fc"/><g stroke="#45b4ea" stroke-width="1"><path d="M4.6 4.6 L10.4 10.4 M10.4 4.6 L4.6 10.4 M7.5 2.7 V12.3 M2.7 7.5 H12.3"/></g><circle cx="7.5" cy="7.5" r="1.6" fill="#fff"/></svg>
<div id="t70" style="position:absolute;left:240.6px;top:332.60px;height:16.5px;line-height:16.5px;font-size:13.2px;font-weight:normal;color:#707070;white-space:nowrap;transform:scaleX(1.0580);transform-origin:0 50%;-webkit-text-stroke:0.2px #707070;">#9795</div>
<div id="t71" style="position:absolute;left:292.1px;top:333.30px;height:15.38px;line-height:15.38px;font-size:12.3px;font-weight:bold;color:#141414;white-space:nowrap;transform:scaleX(0.9443);transform-origin:0 50%;">Looking to buy 3 BHK House</div>
<svg style="position:absolute;left:602.21px;top:334.50px" width="11.2" height="11.2" viewBox="0 0 12 12"><circle cx="6" cy="6" r="5.3" fill="none" stroke="#333" stroke-width="1.1"/><circle cx="6" cy="4.6" r="1.8" fill="#333"/><path d="M2.6 9.6 C3.4 7.3 8.6 7.3 9.4 9.6 Z" fill="#333"/></svg>
<div id="t72" style="position:absolute;left:616.84px;top:334.61px;height:12.25px;line-height:12.25px;font-size:9.8px;font-weight:normal;color:#626262;white-space:nowrap;transform:scaleX(1.0721);transform-origin:0 50%;">Ramesh Varma</div>
<div style="position:absolute;left:705.45px;top:331.20000000000005px;width:74.8px;height:17.8px;background:#ffffff;border:1.3px solid #8c8c8c;border-radius:3px"></div>
<div id="t73" style="position:absolute;left:711.25px;top:335.51px;height:11.0px;line-height:11.0px;font-size:8.8px;font-weight:normal;color:#5c5c5c;white-space:nowrap;transform:scaleX(1.0022);transform-origin:0 50%;-webkit-text-stroke:0.3px #5c5c5c;">CLOSED DEAD</div>
<div id="t74" style="position:absolute;left:786.24px;top:334.60px;height:12.5px;line-height:12.5px;font-size:10px;font-weight:normal;color:#5a5a5a;white-space:nowrap;transform:scaleX(0.9880);transform-origin:0 50%;">31/01/2022, 11:34 PM</div>
<div style="position:absolute;left:902.41px;top:331.6px;width:36.4px;height:17.2px;background:#ee2b25;border-radius:3px"></div>
<div id="t75" style="position:absolute;left:907.86px;top:335.40px;height:11.62px;line-height:11.62px;font-size:9.3px;font-weight:bold;color:#ffffff;white-space:nowrap;transform:scaleX(0.9680);transform-origin:0 50%;">DEAD</div>
<div style="position:absolute;left:991.72px;top:328.3px;width:36px;height:24.2px;background:#eff6fe;border:1.3px solid #5a98e4;border-radius:3.5px"></div>
<div id="t76" style="position:absolute;left:1000.4200000000001px;top:335.51px;height:11.62px;line-height:11.62px;font-size:9.3px;font-weight:bold;color:#2f6fd0;white-space:nowrap;transform:scaleX(0.9165);transform-origin:0 50%;">BUY</div>
<div style="position:absolute;left:1032.62px;top:328.3px;width:24.6px;height:24.2px;background:#fff;border:1px solid #e6e6e6;border-radius:3px"></div>
<svg style="position:absolute;left:1043.22px;top:333.90px" width="4" height="12.4" viewBox="0 0 4 12.4" fill="#1a1a1a"><circle cx="2" cy="1.7" r="1.45"/><circle cx="2" cy="6.2" r="1.45"/><circle cx="2" cy="10.7" r="1.45"/></svg>
<div style="position:absolute;left:145.5px;top:358.80000000000007px;width:918px;height:34.6px;background:#f9f9f9"></div>
<div style="position:absolute;left:148px;top:393.40000000000003px;width:915.5px;height:1.6px;background:#e6e6e7"></div>
<div style="position:absolute;left:156.7px;top:370.70000000000005px;width:11.3px;height:11.3px;background:#fff;border:1.2px solid #d0d0d0;border-radius:3px"></div>
<svg style="position:absolute;left:203.6px;top:368.80px" width="15" height="15" viewBox="0 0 15 15"><rect width="15" height="15" rx="3" fill="#e41f1f"/><path d="M7.5 2.6 C9.6 4.9 11 6.7 11 8.7 A3.5 3.5 0 0 1 4 8.7 C4 6.7 5.4 4.9 7.5 2.6 Z" fill="none" stroke="#fff" stroke-width="1.5"/><circle cx="7.3" cy="8.9" r="1" fill="#fff"/></svg>
<div id="t77" style="position:absolute;left:240.6px;top:368.81px;height:16.5px;line-height:16.5px;font-size:13.2px;font-weight:normal;color:#707070;white-space:nowrap;transform:scaleX(1.0717);transform-origin:0 50%;-webkit-text-stroke:0.2px #707070;">#9796</div>
<div id="t78" style="position:absolute;left:291.8px;top:369.51px;height:15.38px;line-height:15.38px;font-size:12.3px;font-weight:bold;color:#141414;white-space:nowrap;transform:scaleX(0.9642);transform-origin:0 50%;">Looking to buy 4 BHK Independent Bunglow / Villa</div>
<svg style="position:absolute;left:602.21px;top:370.70px" width="11.2" height="11.2" viewBox="0 0 12 12"><circle cx="6" cy="6" r="5.3" fill="none" stroke="#333" stroke-width="1.1"/><circle cx="6" cy="4.6" r="1.8" fill="#333"/><path d="M2.6 9.6 C3.4 7.3 8.6 7.3 9.4 9.6 Z" fill="#333"/></svg>
<div id="t79" style="position:absolute;left:616.85px;top:370.80px;height:12.25px;line-height:12.25px;font-size:9.8px;font-weight:normal;color:#626262;white-space:nowrap;transform:scaleX(1.0984);transform-origin:0 50%;">Laxman Datta</div>
<div style="position:absolute;left:705.49px;top:367.4000000000001px;width:73px;height:17.8px;background:#ecfafa;border:1.3px solid #38b6b2;border-radius:3px"></div>
<div id="t80" style="position:absolute;left:711.24px;top:371.71px;height:11.0px;line-height:11.0px;font-size:8.8px;font-weight:normal;color:#17908c;white-space:nowrap;transform:scaleX(1.0229);transform-origin:0 50%;-webkit-text-stroke:0.3px #17908c;">CLOSED WON</div>
<div id="t81" style="position:absolute;left:784.51px;top:370.81px;height:12.5px;line-height:12.5px;font-size:10px;font-weight:normal;color:#5a5a5a;white-space:nowrap;transform:scaleX(0.9880);transform-origin:0 50%;">31/01/2022, 11:34 PM</div>
<div style="position:absolute;left:902.53px;top:367.80000000000007px;width:35.3px;height:17.2px;background:#f3961c;border-radius:3px"></div>
<div id="t82" style="position:absolute;left:907.93px;top:371.61px;height:11.62px;line-height:11.62px;font-size:9.3px;font-weight:bold;color:#ffffff;white-space:nowrap;transform:scaleX(1.0777);transform-origin:0 50%;">WON</div>
<div style="position:absolute;left:991.87px;top:364.50000000000006px;width:36px;height:24.2px;background:#eff6fe;border:1.3px solid #5a98e4;border-radius:3.5px"></div>
<div id="t83" style="position:absolute;left:1000.57px;top:371.71px;height:11.62px;line-height:11.62px;font-size:9.3px;font-weight:bold;color:#2f6fd0;white-space:nowrap;transform:scaleX(0.9165);transform-origin:0 50%;">BUY</div>
<div style="position:absolute;left:1032.79px;top:364.50000000000006px;width:24.6px;height:24.2px;background:#fff;border:1px solid #e6e6e6;border-radius:3px"></div>
<svg style="position:absolute;left:1043.39px;top:370.10px" width="4" height="12.4" viewBox="0 0 4 12.4" fill="#1a1a1a"><circle cx="2" cy="1.7" r="1.45"/><circle cx="2" cy="6.2" r="1.45"/><circle cx="2" cy="10.7" r="1.45"/></svg>
<div style="position:absolute;left:148px;top:429.6px;width:915.5px;height:1.6px;background:#f0f0f1"></div>
<div style="position:absolute;left:156.7px;top:406.9px;width:11.3px;height:11.3px;background:#fff;border:1.2px solid #d0d0d0;border-radius:3px"></div>
<svg style="position:absolute;left:203.6px;top:405.00px" width="15" height="15" viewBox="0 0 15 15"><rect width="15" height="15" rx="3" fill="#e41f1f"/><path d="M7.5 2.6 C9.6 4.9 11 6.7 11 8.7 A3.5 3.5 0 0 1 4 8.7 C4 6.7 5.4 4.9 7.5 2.6 Z" fill="none" stroke="#fff" stroke-width="1.5"/><circle cx="7.3" cy="8.9" r="1" fill="#fff"/></svg>
<div id="t84" style="position:absolute;left:240.6px;top:405.00px;height:16.5px;line-height:16.5px;font-size:13.2px;font-weight:normal;color:#707070;white-space:nowrap;transform:scaleX(1.0608);transform-origin:0 50%;-webkit-text-stroke:0.2px #707070;">#9789</div>
<div id="t85" style="position:absolute;left:292.5px;top:405.71px;height:15.38px;line-height:15.38px;font-size:12.3px;font-weight:bold;color:#141414;white-space:nowrap;transform:scaleX(0.9642);transform-origin:0 50%;">Looking to buy 4 BHK Independent Bunglow / Villa</div>
<svg style="position:absolute;left:602.21px;top:406.90px" width="11.2" height="11.2" viewBox="0 0 12 12"><circle cx="6" cy="6" r="5.3" fill="none" stroke="#333" stroke-width="1.1"/><circle cx="6" cy="4.6" r="1.8" fill="#333"/><path d="M2.6 9.6 C3.4 7.3 8.6 7.3 9.4 9.6 Z" fill="#333"/></svg>
<div id="t86" style="position:absolute;left:616.85px;top:407.01px;height:12.25px;line-height:12.25px;font-size:9.8px;font-weight:normal;color:#626262;white-space:nowrap;transform:scaleX(1.0721);transform-origin:0 50%;">Ramesh Varma</div>
<div style="position:absolute;left:705.53px;top:403.6px;width:64.3px;height:17.8px;background:#fffdf3;border:1.3px solid #f3d37c;border-radius:3px"></div>
<div id="t87" style="position:absolute;left:711.68px;top:407.90px;height:11.0px;line-height:11.0px;font-size:8.8px;font-weight:normal;color:#e6b41e;white-space:nowrap;transform:scaleX(1.0036);transform-origin:0 50%;-webkit-text-stroke:0.3px #e6b41e;">FOLLOW UP</div>
<div id="t88" style="position:absolute;left:775.85px;top:407.00px;height:12.5px;line-height:12.5px;font-size:10px;font-weight:normal;color:#5a5a5a;white-space:nowrap;transform:scaleX(0.9880);transform-origin:0 50%;">31/01/2022, 11:34 PM</div>
<div style="position:absolute;left:902.65px;top:404.0px;width:36.4px;height:17.2px;background:#ee2b25;border-radius:3px"></div>
<div id="t89" style="position:absolute;left:908.1px;top:407.80px;height:11.62px;line-height:11.62px;font-size:9.3px;font-weight:bold;color:#ffffff;white-space:nowrap;transform:scaleX(0.9680);transform-origin:0 50%;">DEAD</div>
<div style="position:absolute;left:992.03px;top:400.7px;width:36px;height:24.2px;background:#eff6fe;border:1.3px solid #5a98e4;border-radius:3.5px"></div>
<div id="t90" style="position:absolute;left:1000.73px;top:407.90px;height:11.62px;line-height:11.62px;font-size:9.3px;font-weight:bold;color:#2f6fd0;white-space:nowrap;transform:scaleX(0.9165);transform-origin:0 50%;">BUY</div>
<div style="position:absolute;left:1032.96px;top:400.7px;width:24.6px;height:24.2px;background:#fff;border:1px solid #e6e6e6;border-radius:3px"></div>
<svg style="position:absolute;left:1043.56px;top:406.30px" width="4" height="12.4" viewBox="0 0 4 12.4" fill="#1a1a1a"><circle cx="2" cy="1.7" r="1.45"/><circle cx="2" cy="6.2" r="1.45"/><circle cx="2" cy="10.7" r="1.45"/></svg>
<div style="position:absolute;left:145.5px;top:431.20000000000005px;width:918px;height:34.6px;background:#f9f9f9"></div>
<div style="position:absolute;left:148px;top:465.8px;width:915.5px;height:1.6px;background:#e6e6e7"></div>
<div style="position:absolute;left:156.7px;top:443.1px;width:11.3px;height:11.3px;background:#fff;border:1.2px solid #d0d0d0;border-radius:3px"></div>
<svg style="position:absolute;left:203.6px;top:441.20px" width="15" height="15" viewBox="0 0 15 15"><rect width="15" height="15" rx="3" fill="#45484f"/><circle cx="7.5" cy="7.5" r="4.1" fill="none" stroke="#fff" stroke-width="1.9"/><circle cx="7.5" cy="7.5" r="1.2" fill="#9a9ca0"/></svg>
<div id="t91" style="position:absolute;left:240.6px;top:441.21px;height:16.5px;line-height:16.5px;font-size:13.2px;font-weight:normal;color:#707070;white-space:nowrap;transform:scaleX(1.0880);transform-origin:0 50%;-webkit-text-stroke:0.2px #707070;">#9790</div>
<div id="t92" style="position:absolute;left:293.1px;top:441.90px;height:15.38px;line-height:15.38px;font-size:12.3px;font-weight:bold;color:#141414;white-space:nowrap;transform:scaleX(0.9443);transform-origin:0 50%;">Looking to buy 3 BHK House</div>
<svg style="position:absolute;left:602.21px;top:443.10px" width="11.2" height="11.2" viewBox="0 0 12 12"><circle cx="6" cy="6" r="5.3" fill="none" stroke="#333" stroke-width="1.1"/><circle cx="6" cy="4.6" r="1.8" fill="#333"/><path d="M2.6 9.6 C3.4 7.3 8.6 7.3 9.4 9.6 Z" fill="#333"/></svg>
<div id="t93" style="position:absolute;left:616.86px;top:443.21px;height:12.25px;line-height:12.25px;font-size:9.8px;font-weight:normal;color:#626262;white-space:nowrap;transform:scaleX(1.0820);transform-origin:0 50%;">Vikaram Patel</div>
<div style="position:absolute;left:705.57px;top:439.80000000000007px;width:74.8px;height:17.8px;background:#ffffff;border:1.3px solid #8c8c8c;border-radius:3px"></div>
<div id="t94" style="position:absolute;left:711.37px;top:444.11px;height:11.0px;line-height:11.0px;font-size:8.8px;font-weight:normal;color:#5c5c5c;white-space:nowrap;transform:scaleX(1.0022);transform-origin:0 50%;-webkit-text-stroke:0.3px #5c5c5c;">CLOSED DEAD</div>
<div id="t95" style="position:absolute;left:786.46px;top:443.21px;height:12.5px;line-height:12.5px;font-size:10px;font-weight:normal;color:#5a5a5a;white-space:nowrap;transform:scaleX(0.9880);transform-origin:0 50%;">31/01/2022, 11:34 PM</div>
<div style="position:absolute;left:902.77px;top:440.20000000000005px;width:36.4px;height:17.2px;background:#ee2b25;border-radius:3px"></div>
<div id="t96" style="position:absolute;left:908.22px;top:444.01px;height:11.62px;line-height:11.62px;font-size:9.3px;font-weight:bold;color:#ffffff;white-space:nowrap;transform:scaleX(0.9680);transform-origin:0 50%;">DEAD</div>
<div style="position:absolute;left:992.18px;top:436.90000000000003px;width:36px;height:24.2px;background:#fdf1f1;border:1.3px solid #e06a6a;border-radius:3.5px"></div>
<div id="t97" style="position:absolute;left:1000.18px;top:444.11px;height:11.62px;line-height:11.62px;font-size:9.3px;font-weight:bold;color:#d83a3a;white-space:nowrap;transform:scaleX(0.8205);transform-origin:0 50%;">SELL</div>
<div style="position:absolute;left:1033.13px;top:436.90000000000003px;width:24.6px;height:24.2px;background:#fff;border:1px solid #e6e6e6;border-radius:3px"></div>
<svg style="position:absolute;left:1043.73px;top:442.50px" width="4" height="12.4" viewBox="0 0 4 12.4" fill="#1a1a1a"><circle cx="2" cy="1.7" r="1.45"/><circle cx="2" cy="6.2" r="1.45"/><circle cx="2" cy="10.7" r="1.45"/></svg>
<div style="position:absolute;left:148px;top:502.00000000000006px;width:915.5px;height:1.6px;background:#f0f0f1"></div>
<div style="position:absolute;left:156.7px;top:479.29999999999995px;width:11.3px;height:11.3px;background:#fff;border:1.2px solid #d0d0d0;border-radius:3px"></div>
<svg style="position:absolute;left:203.6px;top:477.40px" width="15" height="15" viewBox="0 0 15 15"><rect width="15" height="15" rx="3" fill="#45b4ea"/><circle cx="7.5" cy="7.5" r="4.8" fill="#dff3fc"/><g stroke="#45b4ea" stroke-width="1"><path d="M4.6 4.6 L10.4 10.4 M10.4 4.6 L4.6 10.4 M7.5 2.7 V12.3 M2.7 7.5 H12.3"/></g><circle cx="7.5" cy="7.5" r="1.6" fill="#fff"/></svg>
<div id="t98" style="position:absolute;left:240.6px;top:477.41px;height:16.5px;line-height:16.5px;font-size:13.2px;font-weight:normal;color:#707070;white-space:nowrap;transform:scaleX(0.9599);transform-origin:0 50%;-webkit-text-stroke:0.2px #707070;">#9791</div>
<div id="t99" style="position:absolute;left:289.1px;top:478.11px;height:15.38px;line-height:15.38px;font-size:12.3px;font-weight:bold;color:#141414;white-space:nowrap;transform:scaleX(0.9344);transform-origin:0 50%;">Looking to 2 BHK House</div>
<svg style="position:absolute;left:602.21px;top:479.30px" width="11.2" height="11.2" viewBox="0 0 12 12"><circle cx="6" cy="6" r="5.3" fill="none" stroke="#333" stroke-width="1.1"/><circle cx="6" cy="4.6" r="1.8" fill="#333"/><path d="M2.6 9.6 C3.4 7.3 8.6 7.3 9.4 9.6 Z" fill="#333"/></svg>
<div id="t100" style="position:absolute;left:616.87px;top:479.40px;height:12.25px;line-height:12.25px;font-size:9.8px;font-weight:normal;color:#626262;white-space:nowrap;transform:scaleX(1.0721);transform-origin:0 50%;">Ramesh Varma</div>
<div style="position:absolute;left:705.61px;top:476.0px;width:76px;height:17.8px;background:#eef6ff;border:1.3px solid #4a92e4;border-radius:3px"></div>
<div id="t101" style="position:absolute;left:711.61px;top:480.30px;height:11.0px;line-height:11.0px;font-size:8.8px;font-weight:normal;color:#1d6cc9;white-space:nowrap;transform:scaleX(1.0310);transform-origin:0 50%;-webkit-text-stroke:0.3px #1d6cc9;">NEW ACTIVITY</div>
<div id="t102" style="position:absolute;left:787.73px;top:479.40px;height:12.5px;line-height:12.5px;font-size:10px;font-weight:normal;color:#5a5a5a;white-space:nowrap;transform:scaleX(0.9880);transform-origin:0 50%;">31/01/2022, 11:34 PM</div>
<div style="position:absolute;left:902.89px;top:476.4px;width:55.6px;height:17.2px;background:#696b70;border-radius:3px"></div>
<div id="t103" style="position:absolute;left:908.1899999999999px;top:480.21px;height:11.62px;line-height:11.62px;font-size:9.3px;font-weight:bold;color:#ffffff;white-space:nowrap;transform:scaleX(0.9860);transform-origin:0 50%;">IN ACTIVE</div>
<div style="position:absolute;left:992.34px;top:473.09999999999997px;width:36px;height:24.2px;background:#fdf1f1;border:1.3px solid #e06a6a;border-radius:3.5px"></div>
<div id="t104" style="position:absolute;left:1000.34px;top:480.30px;height:11.62px;line-height:11.62px;font-size:9.3px;font-weight:bold;color:#d83a3a;white-space:nowrap;transform:scaleX(0.8205);transform-origin:0 50%;">SELL</div>
<div style="position:absolute;left:1033.3px;top:473.09999999999997px;width:24.6px;height:24.2px;background:#fff;border:1px solid #e6e6e6;border-radius:3px"></div>
<svg style="position:absolute;left:1043.90px;top:478.70px" width="4" height="12.4" viewBox="0 0 4 12.4" fill="#1a1a1a"><circle cx="2" cy="1.7" r="1.45"/><circle cx="2" cy="6.2" r="1.45"/><circle cx="2" cy="10.7" r="1.45"/></svg>
<div style="position:absolute;left:145.5px;top:503.6000000000001px;width:918px;height:34.6px;background:#f9f9f9"></div>
<div style="position:absolute;left:148px;top:538.2px;width:915.5px;height:1.6px;background:#e6e6e7"></div>
<div style="position:absolute;left:156.7px;top:515.5px;width:11.3px;height:11.3px;background:#fff;border:1.2px solid #d0d0d0;border-radius:3px"></div>
<svg style="position:absolute;left:203.6px;top:513.60px" width="15" height="15" viewBox="0 0 15 15"><rect width="15" height="15" rx="3" fill="#45b4ea"/><circle cx="7.5" cy="7.5" r="4.8" fill="#dff3fc"/><g stroke="#45b4ea" stroke-width="1"><path d="M4.6 4.6 L10.4 10.4 M10.4 4.6 L4.6 10.4 M7.5 2.7 V12.3 M2.7 7.5 H12.3"/></g><circle cx="7.5" cy="7.5" r="1.6" fill="#fff"/></svg>
<div id="t105" style="position:absolute;left:240.6px;top:513.60px;height:16.5px;line-height:16.5px;font-size:13.2px;font-weight:normal;color:#707070;white-space:nowrap;transform:scaleX(1.0226);transform-origin:0 50%;-webkit-text-stroke:0.2px #707070;">#9792</div>
<div id="t106" style="position:absolute;left:291.40000000000003px;top:514.30px;height:15.38px;line-height:15.38px;font-size:12.3px;font-weight:bold;color:#141414;white-space:nowrap;transform:scaleX(0.9473);transform-origin:0 50%;">Looking to buy 5 BHK House</div>
<svg style="position:absolute;left:602.21px;top:515.50px" width="11.2" height="11.2" viewBox="0 0 12 12"><circle cx="6" cy="6" r="5.3" fill="none" stroke="#333" stroke-width="1.1"/><circle cx="6" cy="4.6" r="1.8" fill="#333"/><path d="M2.6 9.6 C3.4 7.3 8.6 7.3 9.4 9.6 Z" fill="#333"/></svg>
<div id="t107" style="position:absolute;left:616.87px;top:515.61px;height:12.25px;line-height:12.25px;font-size:9.8px;font-weight:normal;color:#626262;white-space:nowrap;transform:scaleX(1.0700);transform-origin:0 50%;">Kartik Shah</div>
<div style="position:absolute;left:705.65px;top:512.2px;width:55.2px;height:17.8px;background:#f0fcf1;border:1.3px solid #4cc766;border-radius:3px"></div>
<div id="t108" style="position:absolute;left:711.5px;top:516.51px;height:11.0px;line-height:11.0px;font-size:8.8px;font-weight:normal;color:#2aa845;white-space:nowrap;transform:scaleX(0.9886);transform-origin:0 50%;-webkit-text-stroke:0.3px #2aa845;">SITE VISIT</div>
<div id="t109" style="position:absolute;left:766.92px;top:515.60px;height:12.5px;line-height:12.5px;font-size:10px;font-weight:normal;color:#5a5a5a;white-space:nowrap;transform:scaleX(0.9880);transform-origin:0 50%;">31/01/2022, 11:34 PM</div>
<div style="position:absolute;left:903.0px;top:512.6px;width:44.2px;height:17.2px;background:#16a9ae;border-radius:3px"></div>
<div id="t110" style="position:absolute;left:908.35px;top:516.40px;height:11.62px;line-height:11.62px;font-size:9.3px;font-weight:bold;color:#ffffff;white-space:nowrap;transform:scaleX(0.9826);transform-origin:0 50%;">ACTIVE</div>
<div style="position:absolute;left:992.49px;top:509.3px;width:36px;height:24.2px;background:#eff6fe;border:1.3px solid #5a98e4;border-radius:3.5px"></div>
<div id="t111" style="position:absolute;left:1001.19px;top:516.51px;height:11.62px;line-height:11.62px;font-size:9.3px;font-weight:bold;color:#2f6fd0;white-space:nowrap;transform:scaleX(0.9165);transform-origin:0 50%;">BUY</div>
<div style="position:absolute;left:1033.47px;top:509.3px;width:24.6px;height:24.2px;background:#fff;border:1px solid #e6e6e6;border-radius:3px"></div>
<svg style="position:absolute;left:1044.07px;top:514.90px" width="4" height="12.4" viewBox="0 0 4 12.4" fill="#1a1a1a"><circle cx="2" cy="1.7" r="1.45"/><circle cx="2" cy="6.2" r="1.45"/><circle cx="2" cy="10.7" r="1.45"/></svg>
<div style="position:absolute;left:148px;top:574.4px;width:915.5px;height:1.6px;background:#f0f0f1"></div>
<div style="position:absolute;left:156.7px;top:551.7px;width:11.3px;height:11.3px;background:#fff;border:1.2px solid #d0d0d0;border-radius:3px"></div>
<svg style="position:absolute;left:203.6px;top:549.80px" width="15" height="15" viewBox="0 0 15 15"><rect width="15" height="15" rx="3" fill="#45484f"/><circle cx="7.5" cy="7.5" r="4.1" fill="none" stroke="#fff" stroke-width="1.9"/><circle cx="7.5" cy="7.5" r="1.2" fill="#9a9ca0"/></svg>
<div id="t112" style="position:absolute;left:240.6px;top:549.81px;height:16.5px;line-height:16.5px;font-size:13.2px;font-weight:normal;color:#707070;white-space:nowrap;transform:scaleX(1.0553);transform-origin:0 50%;-webkit-text-stroke:0.2px #707070;">#9793</div>
<div id="t113" style="position:absolute;left:291.5px;top:550.51px;height:15.38px;line-height:15.38px;font-size:12.3px;font-weight:bold;color:#141414;white-space:nowrap;transform:scaleX(0.9354);transform-origin:0 50%;">Looking to Sell 3 BHK House</div>
<svg style="position:absolute;left:602.21px;top:551.70px" width="11.2" height="11.2" viewBox="0 0 12 12"><circle cx="6" cy="6" r="5.3" fill="none" stroke="#333" stroke-width="1.1"/><circle cx="6" cy="4.6" r="1.8" fill="#333"/><path d="M2.6 9.6 C3.4 7.3 8.6 7.3 9.4 9.6 Z" fill="#333"/></svg>
<div id="t114" style="position:absolute;left:616.88px;top:551.80px;height:12.25px;line-height:12.25px;font-size:9.8px;font-weight:normal;color:#626262;white-space:nowrap;transform:scaleX(1.1151);transform-origin:0 50%;">Aditya Patel</div>
<div style="position:absolute;left:705.7px;top:548.4000000000001px;width:73px;height:17.8px;background:#f5f3ff;border:1.3px solid #8277e2;border-radius:3px"></div>
<div id="t115" style="position:absolute;left:711.45px;top:552.71px;height:11.0px;line-height:11.0px;font-size:8.8px;font-weight:normal;color:#4337b8;white-space:nowrap;transform:scaleX(1.0258);transform-origin:0 50%;-webkit-text-stroke:0.3px #4337b8;">NEGOTIATION</div>
<div id="t116" style="position:absolute;left:784.87px;top:551.81px;height:12.5px;line-height:12.5px;font-size:10px;font-weight:normal;color:#5a5a5a;white-space:nowrap;transform:scaleX(0.9880);transform-origin:0 50%;">31/01/2022, 11:34 PM</div>
<div style="position:absolute;left:903.12px;top:548.8000000000001px;width:44.2px;height:17.2px;background:#16a9ae;border-radius:3px"></div>
<div id="t117" style="position:absolute;left:908.47px;top:552.61px;height:11.62px;line-height:11.62px;font-size:9.3px;font-weight:bold;color:#ffffff;white-space:nowrap;transform:scaleX(0.9826);transform-origin:0 50%;">ACTIVE</div>
<div style="position:absolute;left:992.64px;top:545.5000000000001px;width:36px;height:24.2px;background:#fdf1f1;border:1.3px solid #e06a6a;border-radius:3.5px"></div>
<div id="t118" style="position:absolute;left:1000.64px;top:552.71px;height:11.62px;line-height:11.62px;font-size:9.3px;font-weight:bold;color:#d83a3a;white-space:nowrap;transform:scaleX(0.8205);transform-origin:0 50%;">SELL</div>
<div style="position:absolute;left:1033.63px;top:545.5000000000001px;width:24.6px;height:24.2px;background:#fff;border:1px solid #e6e6e6;border-radius:3px"></div>
<svg style="position:absolute;left:1044.23px;top:551.10px" width="4" height="12.4" viewBox="0 0 4 12.4" fill="#1a1a1a"><circle cx="2" cy="1.7" r="1.45"/><circle cx="2" cy="6.2" r="1.45"/><circle cx="2" cy="10.7" r="1.45"/></svg>
<div style="position:absolute;left:145.5px;top:576.0px;width:918px;height:34.6px;background:#f9f9f9"></div>
<div style="position:absolute;left:148px;top:610.6px;width:915.5px;height:1.6px;background:#e6e6e7"></div>
<div style="position:absolute;left:156.7px;top:587.9px;width:11.3px;height:11.3px;background:#fff;border:1.2px solid #d0d0d0;border-radius:3px"></div>
<svg style="position:absolute;left:203.6px;top:586.00px" width="15" height="15" viewBox="0 0 15 15"><rect width="15" height="15" rx="3" fill="#45484f"/><circle cx="7.5" cy="7.5" r="4.1" fill="none" stroke="#fff" stroke-width="1.9"/><circle cx="7.5" cy="7.5" r="1.2" fill="#9a9ca0"/></svg>
<div id="t119" style="position:absolute;left:240.6px;top:586.00px;height:16.5px;line-height:16.5px;font-size:13.2px;font-weight:normal;color:#707070;white-space:nowrap;transform:scaleX(1.0717);transform-origin:0 50%;-webkit-text-stroke:0.2px #707070;">#9794</div>
<div id="t120" style="position:absolute;left:292.1px;top:586.71px;height:15.38px;line-height:15.38px;font-size:12.3px;font-weight:bold;color:#141414;white-space:nowrap;transform:scaleX(0.9400);transform-origin:0 50%;">Looking to sell 3 BHK House</div>
<svg style="position:absolute;left:602.21px;top:587.90px" width="11.2" height="11.2" viewBox="0 0 12 12"><circle cx="6" cy="6" r="5.3" fill="none" stroke="#333" stroke-width="1.1"/><circle cx="6" cy="4.6" r="1.8" fill="#333"/><path d="M2.6 9.6 C3.4 7.3 8.6 7.3 9.4 9.6 Z" fill="#333"/></svg>
<div id="t121" style="position:absolute;left:616.89px;top:588.01px;height:12.25px;line-height:12.25px;font-size:9.8px;font-weight:normal;color:#626262;white-space:nowrap;transform:scaleX(1.0655);transform-origin:0 50%;">Rajesh Patel</div>
<div style="position:absolute;left:705.74px;top:584.6px;width:74.8px;height:17.8px;background:#ffffff;border:1.3px solid #8c8c8c;border-radius:3px"></div>
<div id="t122" style="position:absolute;left:711.54px;top:588.90px;height:11.0px;line-height:11.0px;font-size:8.8px;font-weight:normal;color:#5c5c5c;white-space:nowrap;transform:scaleX(1.0022);transform-origin:0 50%;-webkit-text-stroke:0.3px #5c5c5c;">CLOSED DEAD</div>
<div id="t123" style="position:absolute;left:786.75px;top:588.00px;height:12.5px;line-height:12.5px;font-size:10px;font-weight:normal;color:#5a5a5a;white-space:nowrap;transform:scaleX(0.9880);transform-origin:0 50%;">31/01/2022, 11:34 PM</div>
<div style="position:absolute;left:903.24px;top:585.0px;width:36.4px;height:17.2px;background:#ee2b25;border-radius:3px"></div>
<div id="t124" style="position:absolute;left:908.69px;top:588.80px;height:11.62px;line-height:11.62px;font-size:9.3px;font-weight:bold;color:#ffffff;white-space:nowrap;transform:scaleX(0.9680);transform-origin:0 50%;">DEAD</div>
<div style="position:absolute;left:992.8px;top:581.7px;width:36px;height:24.2px;background:#fdf1f1;border:1.3px solid #e06a6a;border-radius:3.5px"></div>
<div id="t125" style="position:absolute;left:1000.8px;top:588.90px;height:11.62px;line-height:11.62px;font-size:9.3px;font-weight:bold;color:#d83a3a;white-space:nowrap;transform:scaleX(0.8205);transform-origin:0 50%;">SELL</div>
<div style="position:absolute;left:1033.8px;top:581.7px;width:24.6px;height:24.2px;background:#fff;border:1px solid #e6e6e6;border-radius:3px"></div>
<svg style="position:absolute;left:1044.40px;top:587.30px" width="4" height="12.4" viewBox="0 0 4 12.4" fill="#1a1a1a"><circle cx="2" cy="1.7" r="1.45"/><circle cx="2" cy="6.2" r="1.45"/><circle cx="2" cy="10.7" r="1.45"/></svg>
<div style="position:absolute;left:148px;top:646.8px;width:915.5px;height:1.6px;background:#f0f0f1"></div>
<div style="position:absolute;left:156.7px;top:624.1px;width:11.3px;height:11.3px;background:#fff;border:1.2px solid #d0d0d0;border-radius:3px"></div>
<svg style="position:absolute;left:203.6px;top:622.20px" width="15" height="15" viewBox="0 0 15 15"><rect width="15" height="15" rx="3" fill="#45b4ea"/><circle cx="7.5" cy="7.5" r="4.8" fill="#dff3fc"/><g stroke="#45b4ea" stroke-width="1"><path d="M4.6 4.6 L10.4 10.4 M10.4 4.6 L4.6 10.4 M7.5 2.7 V12.3 M2.7 7.5 H12.3"/></g><circle cx="7.5" cy="7.5" r="1.6" fill="#fff"/></svg>
<div id="t126" style="position:absolute;left:240.6px;top:622.21px;height:16.5px;line-height:16.5px;font-size:13.2px;font-weight:normal;color:#707070;white-space:nowrap;transform:scaleX(1.0580);transform-origin:0 50%;-webkit-text-stroke:0.2px #707070;">#9795</div>
<div id="t127" style="position:absolute;left:292.1px;top:622.90px;height:15.38px;line-height:15.38px;font-size:12.3px;font-weight:bold;color:#141414;white-space:nowrap;transform:scaleX(0.9443);transform-origin:0 50%;">Looking to buy 3 BHK House</div>
<svg style="position:absolute;left:602.21px;top:624.10px" width="11.2" height="11.2" viewBox="0 0 12 12"><circle cx="6" cy="6" r="5.3" fill="none" stroke="#333" stroke-width="1.1"/><circle cx="6" cy="4.6" r="1.8" fill="#333"/><path d="M2.6 9.6 C3.4 7.3 8.6 7.3 9.4 9.6 Z" fill="#333"/></svg>
<div id="t128" style="position:absolute;left:616.89px;top:624.21px;height:12.25px;line-height:12.25px;font-size:9.8px;font-weight:normal;color:#626262;white-space:nowrap;transform:scaleX(1.0721);transform-origin:0 50%;">Ramesh Varma</div>
<div style="position:absolute;left:705.78px;top:620.8000000000001px;width:74.8px;height:17.8px;background:#ffffff;border:1.3px solid #8c8c8c;border-radius:3px"></div>
<div id="t129" style="position:absolute;left:711.5799999999999px;top:625.11px;height:11.0px;line-height:11.0px;font-size:8.8px;font-weight:normal;color:#5c5c5c;white-space:nowrap;transform:scaleX(1.0022);transform-origin:0 50%;-webkit-text-stroke:0.3px #5c5c5c;">CLOSED DEAD</div>
<div id="t130" style="position:absolute;left:786.82px;top:624.21px;height:12.5px;line-height:12.5px;font-size:10px;font-weight:normal;color:#5a5a5a;white-space:nowrap;transform:scaleX(0.9880);transform-origin:0 50%;">31/01/2022, 11:34 PM</div>
<div style="position:absolute;left:903.36px;top:621.2px;width:36.4px;height:17.2px;background:#ee2b25;border-radius:3px"></div>
<div id="t131" style="position:absolute;left:908.8100000000001px;top:625.01px;height:11.62px;line-height:11.62px;font-size:9.3px;font-weight:bold;color:#ffffff;white-space:nowrap;transform:scaleX(0.9680);transform-origin:0 50%;">DEAD</div>
<div style="position:absolute;left:992.95px;top:617.9000000000001px;width:36px;height:24.2px;background:#eff6fe;border:1.3px solid #5a98e4;border-radius:3.5px"></div>
<div id="t132" style="position:absolute;left:1001.6500000000001px;top:625.11px;height:11.62px;line-height:11.62px;font-size:9.3px;font-weight:bold;color:#2f6fd0;white-space:nowrap;transform:scaleX(0.9165);transform-origin:0 50%;">BUY</div>
<div style="position:absolute;left:1033.97px;top:617.9000000000001px;width:24.6px;height:24.2px;background:#fff;border:1px solid #e6e6e6;border-radius:3px"></div>
<svg style="position:absolute;left:1044.57px;top:623.50px" width="4" height="12.4" viewBox="0 0 4 12.4" fill="#1a1a1a"><circle cx="2" cy="1.7" r="1.45"/><circle cx="2" cy="6.2" r="1.45"/><circle cx="2" cy="10.7" r="1.45"/></svg>
<div id="t133" style="position:absolute;left:149.5px;top:662.00px;height:15.0px;line-height:15.0px;font-size:12px;font-weight:normal;color:#777;white-space:nowrap;transform:scaleX(0.9046);transform-origin:0 50%;">Showing 1 to 15 of 40 results</div>
<div style="position:absolute;left:906.5px;top:654px;width:112.2px;height:20px;background:#fff;border:1px solid #e2e2e2;border-radius:3px;box-shadow:0 1px 1.5px rgba(0,0,0,0.06)"></div>
<div style="position:absolute;left:971.6px;top:655px;width:23.2px;height:20px;background:#27338f"></div>
<div style="position:absolute;left:1020.5px;top:654px;width:42.5px;height:20px;background:#fff;border:1px solid #e2e2e2;border-radius:3px;box-shadow:0 1px 1.5px rgba(0,0,0,0.06)"></div>
<div id="t134" style="position:absolute;left:916.5px;top:661.31px;height:15.0px;line-height:15.0px;font-size:12px;font-weight:normal;color:#555;white-space:nowrap;transform:scaleX(0.8996);transform-origin:0 50%;">Previous</div>
<div id="t135" style="position:absolute;left:980.5px;top:661.31px;height:15.0px;line-height:15.0px;font-size:12px;font-weight:normal;color:#fff;white-space:nowrap;transform:scaleX(1.0467);transform-origin:0 50%;">1</div>
<div id="t136" style="position:absolute;left:1004.5px;top:661.31px;height:15.0px;line-height:15.0px;font-size:12px;font-weight:normal;color:#555;white-space:nowrap;transform:scaleX(1.0467);transform-origin:0 50%;">2</div>
<div id="t137" style="position:absolute;left:1028px;top:661.31px;height:15.0px;line-height:15.0px;font-size:12px;font-weight:normal;color:#555;white-space:nowrap;transform:scaleX(0.9722);transform-origin:0 50%;">Next</div>
</body></html>
